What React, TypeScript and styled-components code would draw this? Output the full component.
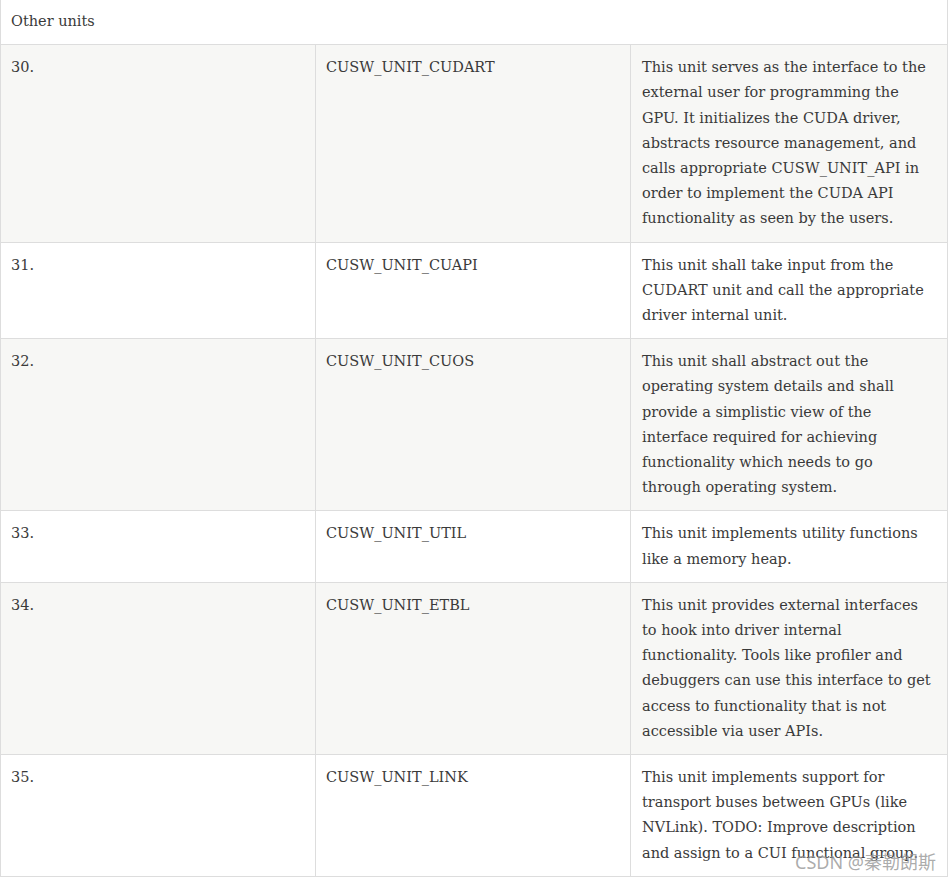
import React from 'react';
import styled, { createGlobalStyle } from 'styled-components';

const GlobalStyle = createGlobalStyle`
  html, body {
    margin: 0;
    padding: 0;
    background: #fff;
  }
`;

const Page = styled.div`
  position: relative;
  width: 951px;
  height: 881px;
  overflow: hidden;
`;

const Table = styled.table`
  width: 947px;
  border-collapse: collapse;
  table-layout: fixed;
  font-family: "DejaVu Serif", "Liberation Serif", serif;
  font-size: 14.5px;
  line-height: 25.2px;
  color: #3a3a3a;
`;

const TitleCell = styled.th`
  text-align: left;
  font-weight: normal;
  padding: 9px 10px 10px 10px;
  border: 1px solid #dddddd;
  border-top: none;
  background: #fff;
`;

const Row = styled.tr<{ $striped: boolean }>`
  background: ${(p) => (p.$striped ? '#f7f7f5' : '#ffffff')};
`;

const Cell = styled.td<{ $desc?: boolean }>`
  vertical-align: top;
  padding: 10px 10px 10px ${(p) => (p.$desc ? '11px' : '10px')};
  border: 1px solid #dddddd;
  white-space: nowrap;
  overflow: hidden;
`;

const Line = styled.span`
  display: block;
`;

const Watermark = styled.div`
  position: absolute;
  right: 15px;
  bottom: 8px;
  font-family: "Noto Sans", "Noto Sans CJK SC", sans-serif;
  font-size: 18px;
  line-height: 22px;
  color: rgba(150, 150, 150, 0.8);
`;

const units = [
  {
    n: '30.',
    name: 'CUSW_UNIT_CUDART',
    desc: [
      'This unit serves as the interface to the',
      'external user for programming the',
      'GPU. It initializes the CUDA driver,',
      'abstracts resource management, and',
      'calls appropriate CUSW_UNIT_API in',
      'order to implement the CUDA API',
      'functionality as seen by the users.',
    ],
  },
  {
    n: '31.',
    name: 'CUSW_UNIT_CUAPI',
    desc: [
      'This unit shall take input from the',
      'CUDART unit and call the appropriate',
      'driver internal unit.',
    ],
  },
  {
    n: '32.',
    name: 'CUSW_UNIT_CUOS',
    desc: [
      'This unit shall abstract out the',
      'operating system details and shall',
      'provide a simplistic view of the',
      'interface required for achieving',
      'functionality which needs to go',
      'through operating system.',
    ],
  },
  {
    n: '33.',
    name: 'CUSW_UNIT_UTIL',
    desc: ['This unit implements utility functions', 'like a memory heap.'],
  },
  {
    n: '34.',
    name: 'CUSW_UNIT_ETBL',
    desc: [
      'This unit provides external interfaces',
      'to hook into driver internal',
      'functionality. Tools like profiler and',
      'debuggers can use this interface to get',
      'access to functionality that is not',
      'accessible via user APIs.',
    ],
  },
  {
    n: '35.',
    name: 'CUSW_UNIT_LINK',
    desc: [
      'This unit implements support for',
      'transport buses between GPUs (like',
      'NVLink). TODO: Improve description',
      'and assign to a CUI functional group.',
    ],
  },
];

export default function App() {
  return (
    <Page>
      <GlobalStyle />
      <Table>
        <colgroup>
          <col style={{ width: 315 }} />
          <col style={{ width: 315 }} />
          <col style={{ width: 317 }} />
        </colgroup>
        <thead>
          <tr>
            <TitleCell colSpan={3}>Other units</TitleCell>
          </tr>
        </thead>
        <tbody>
          {units.map((u, i) => (
            <Row key={u.n} $striped={i % 2 === 0}>
              <Cell>{u.n}</Cell>
              <Cell>{u.name}</Cell>
              <Cell $desc>
                {u.desc.map((line) => (
                  <Line key={line}>{line}</Line>
                ))}
              </Cell>
            </Row>
          ))}
        </tbody>
      </Table>
      <Watermark>CSDN @秦勒朗斯</Watermark>
    </Page>
  );
}
